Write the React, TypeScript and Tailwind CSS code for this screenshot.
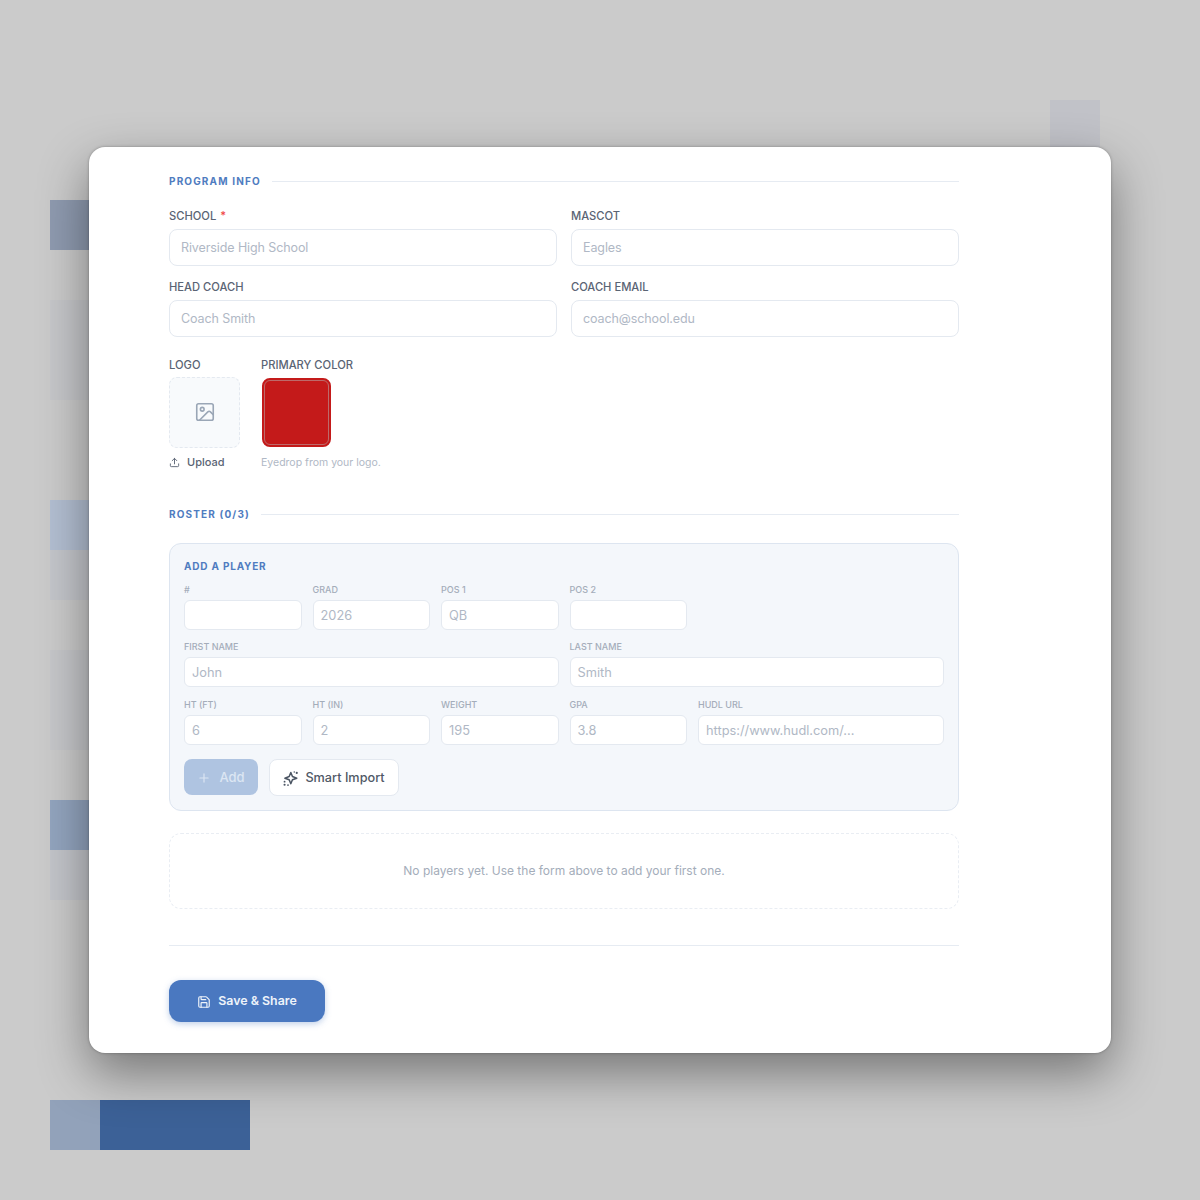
import React from 'react';
import { Image, Upload, Plus, Save } from 'lucide-react';

const sans = '[font-family:Inter,sans-serif]';

const squares = [
  { key: 'a', cls: 'col-start-22 row-start-3 bg-[#c1c2c8]' },
  { key: 'b', cls: 'col-start-2 row-start-5 bg-[#8f9bb0]' },
  { key: 'c', cls: 'col-start-2 row-start-7 row-span-2 bg-[#c6c7ca]' },
  { key: 'd', cls: 'col-start-2 row-start-11 bg-[#b3bfd2]' },
  { key: 'e', cls: 'col-start-2 row-start-12 bg-[#c4c6cb]' },
  { key: 'f', cls: 'col-start-2 row-start-14 row-span-2 bg-[#c6c7ca]' },
  { key: 'g', cls: 'col-start-2 row-start-17 bg-[#93a5bf]' },
  { key: 'h', cls: 'col-start-2 row-start-18 bg-[#c3c5ca]' },
  { key: 'i', cls: 'col-start-2 row-start-23 bg-[#92a2ba]' },
  { key: 'j', cls: 'col-start-3 col-span-3 row-start-23 bg-[#3c6197]' },
];

const SectionTitle = ({ children }: { children: React.ReactNode }) => (
  <div className="flex items-center gap-[11px] h-4">
    <span className="text-[10px] font-bold tracking-[1.15px] text-[#4f7cc0] uppercase whitespace-nowrap">{children}</span>
    <div className="flex-1 h-px bg-[#e6ebf2]" />
  </div>
);

const Field = ({ label, placeholder, required }: { label: string; placeholder: string; required?: boolean }) => (
  <div className="flex flex-col">
    <label className="text-[11.2px] leading-[15px] font-medium text-[#5a6474] uppercase mb-[5px]">
      {label}
      {required && <span className="text-[#ef4444] ml-1">*</span>}
    </label>
    <div className="h-[36.5px] flex items-center px-[11px] pt-[2px] rounded-lg border border-[#e4e9f0] bg-white text-[12.5px] tracking-[-0.1px] text-[#b0b8c5]">
      {placeholder}
    </div>
  </div>
);

const SmallField = ({ label, placeholder, cls }: { label: string; placeholder?: string; cls?: string }) => (
  <div className={`flex flex-col ${cls ?? ''}`}>
    <label className="text-[9px] leading-[12px] font-medium text-[#a4adba] uppercase mb-1">{label}</label>
    <div className="h-[30px] flex items-center px-[7px] pt-[2px] rounded-md border border-[#e4e9f0] bg-white text-[12.8px] text-[#b0b8c5]">
      {placeholder}
    </div>
  </div>
);

// star with loose dots, the lucide sparkles don't have the dots
const SmartIcon = () => (
  <svg width="15" height="15" viewBox="0 0 24 24" fill="none" stroke="currentColor" strokeWidth="2.4" strokeLinejoin="round" className="text-[#4b5563]">
    <path d="M12.5 2.5l2.6 6.4L22 11.5l-6.9 2.6-2.6 6.4-2.6-6.4L3 11.5l6.9-2.6 2.6-6.4z" />
    <circle cx="22" cy="3" r="1.7" fill="currentColor" stroke="none" />
    <circle cx="18" cy="1.5" r="1.2" fill="currentColor" stroke="none" />
    <circle cx="2.5" cy="17" r="1.5" fill="currentColor" stroke="none" />
    <circle cx="2.5" cy="22" r="1.7" fill="currentColor" stroke="none" />
    <circle cx="8" cy="22.5" r="1.4" fill="currentColor" stroke="none" />
  </svg>
);

export default function App() {
  return (
    <div className={`relative w-[1200px] h-[1200px] overflow-hidden bg-[#cbcbcb] ${sans}`}>
      <div className="grid grid-cols-[repeat(24,50px)] grid-rows-[repeat(24,50px)]">
        {squares.map((s) => (
          <div key={s.key} className={s.cls} />
        ))}
      </div>

      <div className="absolute inset-0 flex items-center justify-center">
        <div className="w-[1022px] h-[906px] rounded-2xl bg-white pl-20 pr-[152px] pt-[26px] shadow-[0_20px_50px_rgba(0,0,0,0.42),0_0_3px_rgba(0,0,0,0.3)]">
          <SectionTitle>Program Info</SectionTitle>

          <div className="grid grid-cols-2 gap-x-[14px] gap-y-[14.5px] mt-[20px]">
            <Field label="School" placeholder="Riverside High School" required />
            <Field label="Mascot" placeholder="Eagles" />
            <Field label="Head Coach" placeholder="Coach Smith" />
            <Field label="Coach Email" placeholder="coach@school.edu" />
          </div>

          <div className="flex gap-[21px] mt-[21px]">
            <div className="flex flex-col w-[71px]">
              <label className="text-[11.2px] leading-[15px] font-medium text-[#5a6474] uppercase mb-1">Logo</label>
              <div className="w-[71px] h-[71px] flex items-center justify-center pb-px rounded-lg border border-dashed border-[#e4e9f0] bg-[#f8fafc]">
                <Image size={22} className="text-[#9aa6b6]" strokeWidth={1.75} />
              </div>
              <div className="flex items-center gap-[7px] mt-[7px] h-[15px] text-[11px] font-medium text-[#5a6474]">
                <Upload size={11} />
                Upload
              </div>
            </div>
            <div className="flex flex-col">
              <label className="text-[11.2px] leading-[15px] font-medium text-[#5a6474] uppercase mb-1">Primary Color</label>
              <div className="w-[69px] h-[69px] ml-px mt-px rounded-lg bg-[#c41a1a] border-2 border-[#c41a1a] outline outline-1 -outline-offset-3 outline-[#bd6a6a]" />
              <div className="mt-2 h-[15px] text-[10.5px] text-[#b0b8c5]">Eyedrop from your logo.</div>
            </div>
          </div>

          <div className="mt-[37px]">
            <SectionTitle>Roster (0/3)</SectionTitle>
          </div>

          <div className="mt-5 h-[268px] rounded-xl border border-[#dde5f0] bg-[#f4f7fb] px-[14px] pt-4">
            <div className="text-[10px] leading-3 font-bold tracking-[0.8px] text-[#4f7cc0] uppercase">Add a Player</div>
            <div className="grid grid-cols-6 gap-x-[11px] gap-y-[11.5px] mt-3">
              <SmallField label="#" />
              <SmallField label="Grad" placeholder="2026" />
              <SmallField label="Pos 1" placeholder="QB" />
              <SmallField label="Pos 2" cls="col-span-3 w-[117px]" />
              <SmallField label="First Name" placeholder="John" cls="col-span-3" />
              <SmallField label="Last Name" placeholder="Smith" cls="col-span-3" />
              <SmallField label="Ht (ft)" placeholder="6" />
              <SmallField label="Ht (in)" placeholder="2" />
              <SmallField label="Weight" placeholder="195" />
              <SmallField label="GPA" placeholder="3.8" />
              <SmallField label="Hudl URL" placeholder="https://www.hudl.com/..." cls="col-span-2" />
            </div>
            <div className="flex items-center gap-[11px] mt-[14px]">
              <button className="h-9 w-[74px] flex items-center justify-center gap-2 pt-[2px] rounded-lg bg-[#afc4e1] text-[13px] font-medium text-[#dce6f3]">
                <Plus size={14} />
                Add
              </button>
              <button className="h-[37px] w-[130px] flex items-center justify-center gap-[7px] pt-[2px] rounded-lg border border-[#e4e9f0] bg-white text-[12.7px] font-medium text-[#4f5866]">
                <SmartIcon />
                Smart Import
              </button>
            </div>
          </div>

          <div className="mt-[22px] h-[76px] flex items-center justify-center rounded-xl border border-dashed border-[#e9edf3] text-[12px] text-[#a4adba]">
            No players yet. Use the form above to add your first one.
          </div>

          <div className="mt-9 h-px bg-[#e6ebf2]" />

          <button className="mt-[34px] w-[156px] h-[42px] flex items-center justify-center gap-[7px] pt-[2px] rounded-xl bg-[#4a78c0] text-[12.4px] font-semibold text-[#eef3fa] shadow-[0_2px_6px_rgba(74,120,192,0.35)]">
            <Save size={14} />
            Save &amp; Share
          </button>
        </div>
      </div>
    </div>
  );
}
